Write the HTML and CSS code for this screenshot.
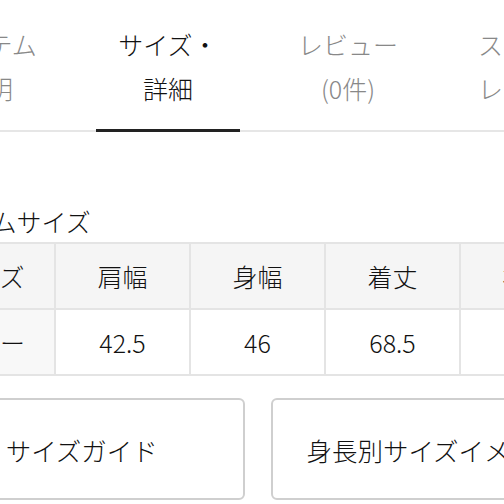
FILE: index.html
```html
<!DOCTYPE html>
<html lang="ja">
<head>
  <meta charset="UTF-8">
  <meta name="viewport" content="width=device-width, initial-scale=1.0">
  <title>サイズ・詳細</title>
  <link rel="stylesheet" href="styles.css">
</head>
<body>
  <div class="page">
    <nav class="tabs">
      <a class="tab">アイテム<br>説明</a>
      <a class="tab active">サイズ・<br>詳細</a>
      <a class="tab">レビュー<br>(0件)</a>
      <a class="tab">スタッフ<br>レビュー</a>
    </nav>

    <section class="size-section">
      <h3 class="section-title">アイテムサイズ</h3>
      <table class="size-table">
        <thead>
          <tr>
            <th>サイズ</th>
            <th>肩幅</th>
            <th>身幅</th>
            <th>着丈</th>
            <th>袖丈</th>
          </tr>
        </thead>
        <tbody>
          <tr>
            <th>フリー</th>
            <td>42.5</td>
            <td>46</td>
            <td>68.5</td>
            <td>22</td>
          </tr>
        </tbody>
      </table>

      <div class="guide-buttons">
        <button type="button" class="guide-btn">サイズガイド</button>
        <button type="button" class="guide-btn">身長別サイズイメージ</button>
      </div>
    </section>
  </div>
</body>
</html>
```

FILE: styles.css
```css
html, body { margin: 0; padding: 0; overflow: hidden; background: #fff; }
body { font-family: "Noto Sans CJK JP", "Noto Sans", sans-serif; font-weight: 300; color: #111; }
.page { margin-left: -81px; width: 677px; }

/* tabs */
.tabs { display: flex; gap: 36px; margin: 0 -3px; border-bottom: 2px solid #e6e6e6; }
.tab { flex: 0 0 144px; text-align: center; font-size: 25px; line-height: 44px; color: #888; padding: 22px 0 19px 0; border-bottom: 3px solid transparent; margin-bottom: -2px; text-decoration: none; }
.tab.active { color: #111; border-bottom-color: #222; }

/* size table */
.section-title { margin: 72px 0 4px 0; font-size: 25px; font-weight: 300; line-height: 34px; }
.size-table { border-collapse: collapse; table-layout: fixed; width: 677px; }
.size-table th, .size-table td { border: 2px solid #e4e4e4; height: 64px; padding: 0; text-align: center; font-size: 25px; font-weight: 300; }
.size-table thead th { background: #f5f5f5; }
.size-table tbody th { background: #f8f8f8; }
.size-table td { background: #fff; }

/* guide buttons */
.guide-buttons { display: grid; grid-template-columns: 1fr 1fr; gap: 26px; margin-top: 22px; }
.guide-btn { height: 102px; background: #fff; border: 2px solid #cfcfcf; border-radius: 6px; font-family: inherit; font-weight: 300; font-size: 25.5px; color: #111; cursor: pointer; }
```
